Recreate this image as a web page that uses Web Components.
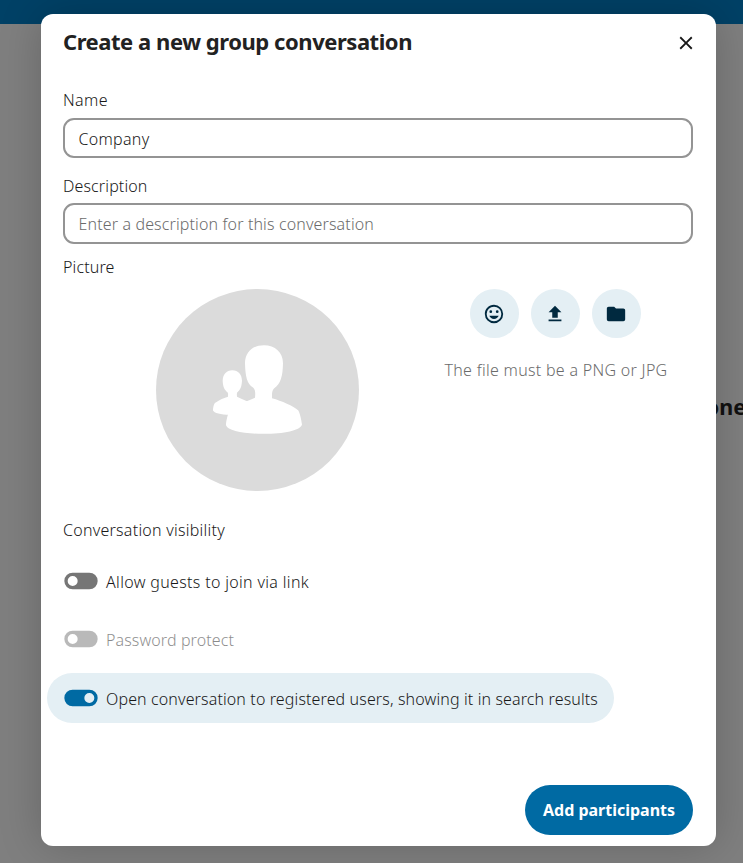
<!DOCTYPE html>
<html lang="en">
<head>
<meta charset="utf-8">
<title>Create a new group conversation</title>
<style>
html,body{margin:0;height:100%;overflow:hidden}
body{font-family:"Noto Sans","Open Sans",sans-serif;font-size:16px;font-weight:350;color:#181818;background:#7f7f7f}
</style>
</head>
<body>
<talk-page>
  <group-dialog heading="Create a new group conversation">
    <text-field label="Name" value="Company" text-width="71" label-width="45"></text-field>
    <text-field label="Description" placeholder="Enter a description for this conversation" text-width="295.5" label-width="84.5" style="margin-top:19px;--label:26px;--box:41px"></text-field>
    <picture-editor></picture-editor>
    <visibility-options>
      <toggle-option width="203">Allow guests to join via link</toggle-option>
      <toggle-option width="128" disabled style="margin-bottom:1px">Password protect</toggle-option>
      <toggle-option width="492" checked>Open conversation to registered users, showing it in search results</toggle-option>
    </visibility-options>
    <primary-button slot="action">Add participants</primary-button>
  </group-dialog>
</talk-page>
<script>
function define(name, html, setup) {
  const t = document.createElement('template');
  t.innerHTML = html;
  customElements.define(name, class extends HTMLElement {
    connectedCallback() {
      if (this.shadowRoot) return;
      this.attachShadow({mode: 'open'}).append(t.content.cloneNode(true));
      if (setup) setup(this, this.shadowRoot);
    }
  });
}

/* A single line of text, tracked so that it spans the given width. */
define('fit-text', `<style>:host{display:block;white-space:nowrap}span{display:inline-block}</style><span><slot></slot></span>`, (el, root) => {
  const span = root.querySelector('span');
  const fit = () => {
    const target = parseFloat(el.getAttribute('width'));
    if (!target) return;
    span.style.letterSpacing = '0';
    const source = el.dataset.chars || el.textContent.trim().length;
    const w = span.getBoundingClientRect().width;
    if (w) span.style.letterSpacing = ((target - w) / source) + 'px';
  };
  new ResizeObserver(fit).observe(el);
  fit();
});

define('mdi-icon', `<style>:host{display:block;width:22px;height:22px}svg{display:block;width:100%;height:100%;fill:currentColor}</style><svg viewBox="0 0 24 24"><path/></svg>`, (el, root) => {
  root.querySelector('path').setAttribute('d', {
    close: 'M19,6.41L17.59,5L12,10.59L6.41,5L5,6.41L10.59,12L5,17.59L6.41,19L12,13.41L17.59,19L19,17.59L13.41,12L19,6.41Z',
    emoticon: 'M12,17.5C14.33,17.5 16.3,16.04 17.11,14H6.89C7.69,16.04 9.67,17.5 12,17.5M8.5,11A1.5,1.5 0 0,0 10,9.5A1.5,1.5 0 0,0 8.5,8A1.5,1.5 0 0,0 7,9.5A1.5,1.5 0 0,0 8.5,11M15.5,11A1.5,1.5 0 0,0 17,9.5A1.5,1.5 0 0,0 15.5,8A1.5,1.5 0 0,0 14,9.5A1.5,1.5 0 0,0 15.5,11M12,20A8,8 0 0,1 4,12A8,8 0 0,1 12,4A8,8 0 0,1 20,12A8,8 0 0,1 12,20M12,2C6.47,2 2,6.5 2,12A10,10 0 0,0 12,22A10,10 0 0,0 22,12A10,10 0 0,0 12,2Z',
    upload: 'M9,16V10H5L12,3L19,10H15V16H9M5,20V18H19V20H5Z',
    folder: 'M10,4H4C2.89,4 2,4.89 2,6V18A2,2 0 0,0 4,20H20A2,2 0 0,0 22,18V8C22,6.89 21.1,6 20,6H12L10,4Z',
    off: 'M17,7H7A5,5 0 0,0 2,12A5,5 0 0,0 7,17H17A5,5 0 0,0 22,12A5,5 0 0,0 17,7M7,15A3,3 0 0,1 4,12A3,3 0 0,1 7,9A3,3 0 0,1 10,12A3,3 0 0,1 7,15Z',
    on: 'M17,7H7A5,5 0 0,0 2,12A5,5 0 0,0 7,17H17A5,5 0 0,0 22,12A5,5 0 0,0 17,7M17,15A3,3 0 0,1 14,12A3,3 0 0,1 17,9A3,3 0 0,1 20,12A3,3 0 0,1 17,15Z'
  }[el.getAttribute('name')]);
});

define('talk-page', `<style>
:host{display:grid;grid-template:24px 1fr / 1fr;height:863px;background:#7f7f7f;overflow:hidden;position:relative}
header{background:#004166}
.behind{position:absolute;right:-3px;top:392px;font-weight:700;font-size:21.5px;line-height:30px;color:#111}
.overlay{position:absolute;inset:0;padding:14px 27px 17px 41px;display:grid}
</style><header></header><main><div class="behind">one</div></main><div class="overlay"><slot></slot></div>`);

define('group-dialog', `<style>
:host{display:flex;flex-direction:column;box-sizing:border-box;background:#fff;border-radius:12px;box-shadow:0 0 44px rgba(0,0,0,.2);padding:12px 23px 11px 22px}
.head{display:flex;justify-content:space-between;height:65px}
h2{margin:0;font-size:22px;line-height:30px;font-weight:700;color:#222}
mdi-icon{margin:6px -4px 0 0}
.foot{margin-top:auto;display:flex;justify-content:flex-end}
</style><div class="head"><h2><fit-text width="349"></fit-text></h2><mdi-icon name="close"></mdi-icon></div><slot></slot><div class="foot"><slot name="action"></slot></div>`, (el, root) => {
  root.querySelector('fit-text').textContent = el.getAttribute('heading');
});

define('text-field', `<style>
:host{display:block}
.label{line-height:19px;height:var(--label,27px)}
.box{box-sizing:border-box;height:var(--box,40px);border:2px solid #949494;border-radius:11px;display:flex;align-items:center;padding:1px 13.5px 0;background:#fff}
.ph{color:#6b6b6b}
</style><div class="label"><fit-text></fit-text></div><div class="box"><fit-text></fit-text></div>`, (el, root) => {
  const [l, v] = root.querySelectorAll('fit-text');
  l.textContent = el.getAttribute('label');
  l.setAttribute('width', el.getAttribute('label-width'));
  v.textContent = el.getAttribute('value') || el.getAttribute('placeholder');
  v.setAttribute('width', el.getAttribute('text-width'));
  if (!el.hasAttribute('value')) v.className = 'ph';
});

define('round-button', `<style>
:host{display:grid;place-items:center;box-sizing:border-box;width:49.5px;height:49px;padding-right:.5px;border-radius:50%;background:#e4eff4;color:#00293f}
</style><slot></slot>`);

define('group-avatar', `<style>:host{display:block;width:203px;height:202px}svg{display:block;width:100%;height:100%}</style>
<svg viewBox="18 26.5 609 606" preserveAspectRatio="none"><ellipse cx="322.5" cy="329.5" rx="304.5" ry="303" fill="#dbdbdb"/>
<g fill="#fff"><path d="M247 270C229 270 218 283 218 302C219 321 223 329 233 337Q235 340 234 350C217 355 200 364 193 371C190 378 189 386 189 391C192 398 212 404 240 404L310 370Q290 364 261 350Q260 342 261 338C271 329 275 320 276 302C276 283 265 270 247 270Z"/>
<path d="M342 195C309 195 285 216 285 249C286 289 291 310 309 322C317 328 316 341 315 353C289 364 251 378 238 393C233 403 228 423 228 435C233 451 282 461 342 461C400 461 453 451 456 433C454 420 450 399 445 391C430 377 395 362 366 354C366 343 365 332 372 325C393 309 398 288 399 249C399 216 375 195 342 195Z"/></g></svg>`);

define('picture-editor', `<style>
:host{display:block;height:263px;margin-top:13px}
.label{line-height:20px;height:32px}
.row{display:flex;align-items:flex-start;padding-left:93px}
.tools{width:223px;margin-left:85.5px;display:flex;flex-direction:column;align-items:center}
.buttons{display:flex;gap:11.5px;margin-left:-1px}
.hint{margin-top:21.5px;line-height:21px;color:#6b6b6b}
</style><div class="label"><fit-text width="51.5">Picture</fit-text></div>
<div class="row"><group-avatar></group-avatar><div class="tools"><div class="buttons">
<round-button><mdi-icon name="emoticon"></mdi-icon></round-button><round-button><mdi-icon name="upload"></mdi-icon></round-button><round-button><mdi-icon name="folder"></mdi-icon></round-button></div>
<div class="hint"><fit-text width="223">The file must be a PNG or JPG</fit-text></div></div></div>`);

define('visibility-options', `<style>
:host{display:block}
.label{line-height:20px;height:36px}
.list{display:flex;flex-direction:column;align-items:flex-start;gap:8px;margin-left:-16px}
</style><div class="label"><fit-text width="162">Conversation visibility</fit-text></div><div class="list"><slot></slot></div>`);

define('toggle-option', `<style>
:host{display:flex;align-items:center;box-sizing:border-box;height:50px;border-radius:25px;padding:0 16px 0 14px}
:host([checked]){background:#e4eff4}
:host([disabled]) .body{opacity:.5}
.body{display:flex;align-items:center}
mdi-icon{width:40px;height:40px;color:#767676}
:host([checked]) mdi-icon{color:#006aa3}
fit-text{margin:2px 0 0 5px;line-height:22px}
</style><div class="body"><fit-text></fit-text></div>`, (el, root) => {
  const icon = document.createElement('mdi-icon');
  icon.setAttribute('name', el.hasAttribute('checked') ? 'on' : 'off');
  root.querySelector('.body').prepend(icon);
  const text = root.querySelector('fit-text');
  text.setAttribute('width', el.getAttribute('width'));
  text.dataset.chars = el.textContent.trim().length;
  text.append(document.createElement('slot'));
});

define('primary-button', `<style>
:host{display:grid;place-items:center;width:168px;height:50px;border-radius:25px;background:#006aa3;color:#fff;font-weight:700}
</style><fit-text width="132"><slot></slot></fit-text>`, (el, root) => {
  root.querySelector('fit-text').dataset.chars = el.textContent.trim().length;
});
</script>
</body>
</html>
